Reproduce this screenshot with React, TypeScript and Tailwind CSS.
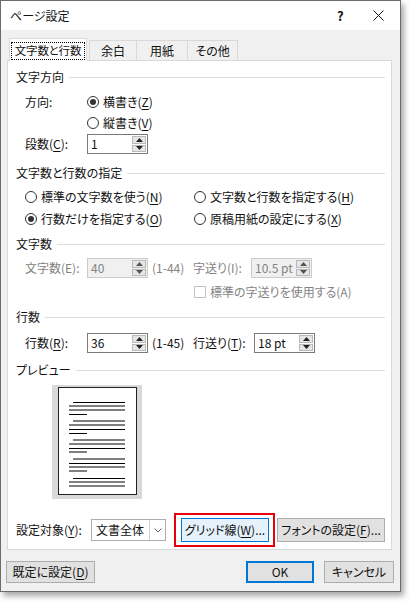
import React from 'react';

const Key: React.FC<{ k: string }> = ({ k }) => (
  <>
    (<u className="underline underline-offset-2">{k}</u>)
  </>
);

const Heading: React.FC<{ children: React.ReactNode; mt: string }> = ({ children, mt }) => (
  <div className={`flex h-[16px] items-center gap-[5px] pr-[6px] ${mt}`}>
    <span className="whitespace-nowrap">{children}</span>
    <div className="h-px flex-1 bg-[#dcdcdc]" />
  </div>
);

const Radio: React.FC<{ checked?: boolean }> = ({ checked }) => (
  <span className="flex h-[12px] w-[12px] shrink-0 items-center justify-center rounded-full border border-[#333333] bg-white">
    {checked && <span className="h-[6px] w-[6px] rounded-full bg-[#333333]" />}
  </span>
);

const Tri: React.FC<{ up?: boolean; dim?: boolean }> = ({ up, dim }) => (
  <svg width="7" height="4" viewBox="0 0 7 4">
    <polygon points={up ? '0,4 7,4 3.5,0' : '0,0 7,0 3.5,4'} fill={dim ? '#555555' : '#222222'} />
  </svg>
);

const Spin: React.FC<{ value: string; disabled?: boolean }> = ({ value, disabled }) => (
  <div
    className={`flex h-[20px] w-[61px] shrink-0 border ${
      disabled ? 'border-[#cccccc] bg-[#f0f0f0] text-[#838383]' : 'border-[#7a7a7a] bg-white'
    }`}
  >
    <div className="flex flex-1 items-center pl-[3px]">{value}</div>
    <div className="flex w-[15px] flex-col gap-px py-px pr-px">
      <div className="flex flex-1 items-center justify-center border border-[#b9b9b9] bg-[#e6e6e6]">
        <Tri up dim={disabled} />
      </div>
      <div className="flex flex-1 items-center justify-center border border-[#b9b9b9] bg-[#e6e6e6]">
        <Tri dim={disabled} />
      </div>
    </div>
  </div>
);

const lines: { x: number; w: number; c: string; h: string }[][] = [
  [
    { x: 14, w: 52, c: 'bg-black', h: 'h-px' },
    { x: 10, w: 56, c: 'bg-[#808080]', h: 'h-[2px]' },
    { x: 10, w: 56, c: 'bg-[#808080]', h: 'h-[2px]' },
    { x: 10, w: 18, c: 'bg-black', h: 'h-px' },
  ],
  [
    { x: 14, w: 52, c: 'bg-[#808080]', h: 'h-[2px]' },
    { x: 10, w: 56, c: 'bg-[#808080]', h: 'h-[2px]' },
    { x: 10, w: 56, c: 'bg-black', h: 'h-px' },
    { x: 10, w: 18, c: 'bg-black', h: 'h-px' },
  ],
  [
    { x: 14, w: 52, c: 'bg-[#808080]', h: 'h-[2px]' },
    { x: 10, w: 56, c: 'bg-[#808080]', h: 'h-[2px]' },
    { x: 10, w: 56, c: 'bg-black', h: 'h-px' },
    { x: 10, w: 18, c: 'bg-[#808080]', h: 'h-[2px]' },
  ],
  [
    { x: 14, w: 52, c: 'bg-[#808080]', h: 'h-[2px]' },
    { x: 10, w: 56, c: 'bg-black', h: 'h-px' },
    { x: 10, w: 56, c: 'bg-[#808080]', h: 'h-[2px]' },
    { x: 10, w: 18, c: 'bg-[#808080]', h: 'h-[2px]' },
  ],
  [
    { x: 14, w: 52, c: 'bg-black', h: 'h-px' },
    { x: 10, w: 56, c: 'bg-[#808080]', h: 'h-[2px]' },
    { x: 10, w: 56, c: 'bg-[#808080]', h: 'h-[2px]' },
  ],
];

export default function App() {
  return (
    <div className="h-[603px] w-[410px] bg-white font-['Noto_Sans_CJK_JP',sans-serif] text-[12px] leading-none text-[#111111] [font-feature-settings:'palt']">
      <div className="flex h-[592px] w-[401px] flex-col border border-[#6b6b6b] bg-[#f0f0f0] shadow-[3px_4px_6px_rgba(0,0,0,0.35)]">
        {/* Title bar */}
        <div className="flex h-[29px] items-center bg-white pl-[9px]">
          <span className="flex-1">ページ設定</span>
          <span className="w-[36px] text-[13px] font-bold">?</span>
          <span className="flex w-[27px] items-center">
            <svg width="11" height="11" viewBox="0 0 11 11">
              <path d="M0.5 0.5 L10.5 10.5 M10.5 0.5 L0.5 10.5" stroke="#111111" strokeWidth="1" />
            </svg>
          </span>
        </div>

        {/* Tabs */}
        <div className="ml-[8px] mt-[8px] flex items-end">
          <div className="relative z-10 -mb-px flex h-[23px] w-[78px] items-center justify-center border border-b-0 border-[#d9d9d9] bg-white px-[1px] pt-[1px]">
            <div className="flex h-[18px] w-full items-center justify-center border border-dotted border-black text-[11.5px] tracking-[-0.2px]">
              文字数と行数
            </div>
          </div>
          <div className="ml-[2px] flex h-[20px] w-[48px] items-center justify-center border border-b-0 border-[#d9d9d9] bg-[#f0f0f0]">
            余白
          </div>
          <div className="flex h-[20px] w-[51px] items-center justify-center border border-b-0 border-l-0 border-[#d9d9d9] bg-[#f0f0f0]">
            用紙
          </div>
          <div className="flex h-[20px] w-[50px] items-center justify-center border border-b-0 border-l-0 border-[#d9d9d9] bg-[#f0f0f0]">
            その他
          </div>
        </div>

        {/* Panel */}
        <div className="ml-[6px] flex h-[490px] w-[385px] flex-col border border-[#d9d9d9] bg-white pl-[8px] pt-[8px]">
          <Heading mt="">文字方向</Heading>
          <div className="mt-[6px] flex h-[21px] items-center pl-[9px]">
            <span className="w-[62px]">方向:</span>
            <Radio checked />
            <span className="ml-[4px]">
              横書き<Key k="Z" />
            </span>
          </div>
          <div className="flex h-[21px] items-center pl-[71px]">
            <Radio />
            <span className="ml-[4px]">
              縦書き<Key k="V" />
            </span>
          </div>
          <div className="mt-[1px] flex h-[20px] items-center pl-[9px]">
            <span className="w-[62px]">
              段数<Key k="C" />:
            </span>
            <Spin value="1" />
          </div>

          <Heading mt="mt-[11px]">文字数と行数の指定</Heading>
          <div className="mt-[5px] flex h-[22px] items-center pl-[9px]">
            <div className="flex w-[169px] items-center">
              <Radio />
              <span className="ml-[4px]">
                標準の文字数を使う<Key k="N" />
              </span>
            </div>
            <Radio />
            <span className="ml-[4px]">
              文字数と行数を指定する<Key k="H" />
            </span>
          </div>
          <div className="flex h-[22px] items-center pl-[9px]">
            <div className="flex w-[169px] items-center">
              <Radio checked />
              <span className="ml-[4px]">
                行数だけを指定する<Key k="O" />
              </span>
            </div>
            <Radio />
            <span className="ml-[4px]">
              原稿用紙の設定にする<Key k="X" />
            </span>
          </div>

          <Heading mt="mt-[6px]">文字数</Heading>
          <div className="mt-[6px] flex h-[20px] items-center pl-[9px] text-[#838383]">
            <span className="w-[62px]">文字数(E):</span>
            <Spin value="40" disabled />
            <span className="ml-[4px] w-[41px]">(1-44)</span>
            <span className="w-[58px]">字送り(I):</span>
            <Spin value="10.5 pt" disabled />
          </div>
          <div className="mt-[4px] flex h-[20px] items-center pl-[178px] text-[#838383]">
            <span className="h-[12px] w-[12px] border border-[#c4c4c4] bg-white" />
            <span className="ml-[4px]">標準の字送りを使用する(A)</span>
          </div>

          <Heading mt="mt-[7px]">行数</Heading>
          <div className="mt-[8px] flex h-[20px] items-center pl-[9px]">
            <span className="w-[62px]">
              行数<Key k="R" />:
            </span>
            <Spin value="36" />
            <span className="ml-[4px] w-[41px]">(1-45)</span>
            <span className="w-[61px]">
              行送り<Key k="T" />:
            </span>
            <Spin value="18 pt" />
          </div>

          <Heading mt="mt-[9px]">プレビュー</Heading>
          <div className="ml-[36px] mt-[7px] h-[114px] w-[90px] bg-[#d9d9d9] pl-[6px] pt-[2px]">
            <div className="h-[108px] w-[79px] border border-[#222222] bg-white pt-[12px]">
              <div className="flex flex-col gap-[3px]">
                {lines.map((g, gi) => (
                  <div key={gi} className="flex flex-col">
                    {g.map((l, li) => (
                      <div key={li} className="flex h-[4px] items-center">
                        <div className={`${l.h} ${l.c}`} style={{ marginLeft: l.x, width: l.w }} />
                      </div>
                    ))}
                  </div>
                ))}
              </div>
            </div>
          </div>

          <div className="mt-[14px] flex h-[34px] items-center">
            <span className="w-[75px]">
              設定対象<Key k="Y" />:
            </span>
            <div className="flex h-[22px] w-[75px] border border-[#adadad] bg-white">
              <span className="flex flex-1 items-center pl-[4px]">文書全体</span>
              <span className="flex w-[16px] items-center justify-center border-l border-[#d0d0d0]">
                <svg width="8" height="5" viewBox="0 0 8 5">
                  <path d="M0.5 0.5 L4 4 L7.5 0.5" stroke="#606060" fill="none" strokeWidth="1" />
                </svg>
              </span>
            </div>
            <div className="ml-[8px] flex h-[34px] w-[101px] items-center border-2 border-[#e8000b] pl-[5px]">
              <div className="flex h-[24px] w-[88px] items-center justify-center border border-[#0078d7] bg-[#e5f1fb]">
                グリッド線<Key k="W" />...
              </div>
            </div>
            <div className="ml-[2px] flex h-[24px] w-[108px] items-center justify-center border border-[#adadad] bg-[#e1e1e1]">
              フォントの設定<Key k="F" />...
            </div>
          </div>
        </div>

        {/* Bottom buttons */}
        <div className="mt-[11px] flex h-[22px] pl-[5px]">
          <div className="flex w-[89px] items-center justify-center border border-[#adadad] bg-[#e1e1e1]">
            既定に設定<Key k="D" />
          </div>
          <div className="ml-[151px] flex w-[68px] items-center justify-center border-2 border-[#0078d7] bg-[#e1e1e1]">
            OK
          </div>
          <div className="ml-[10px] flex w-[70px] items-center justify-center border border-[#adadad] bg-[#e1e1e1]">
            キャンセル
          </div>
        </div>
      </div>
    </div>
  );
}
